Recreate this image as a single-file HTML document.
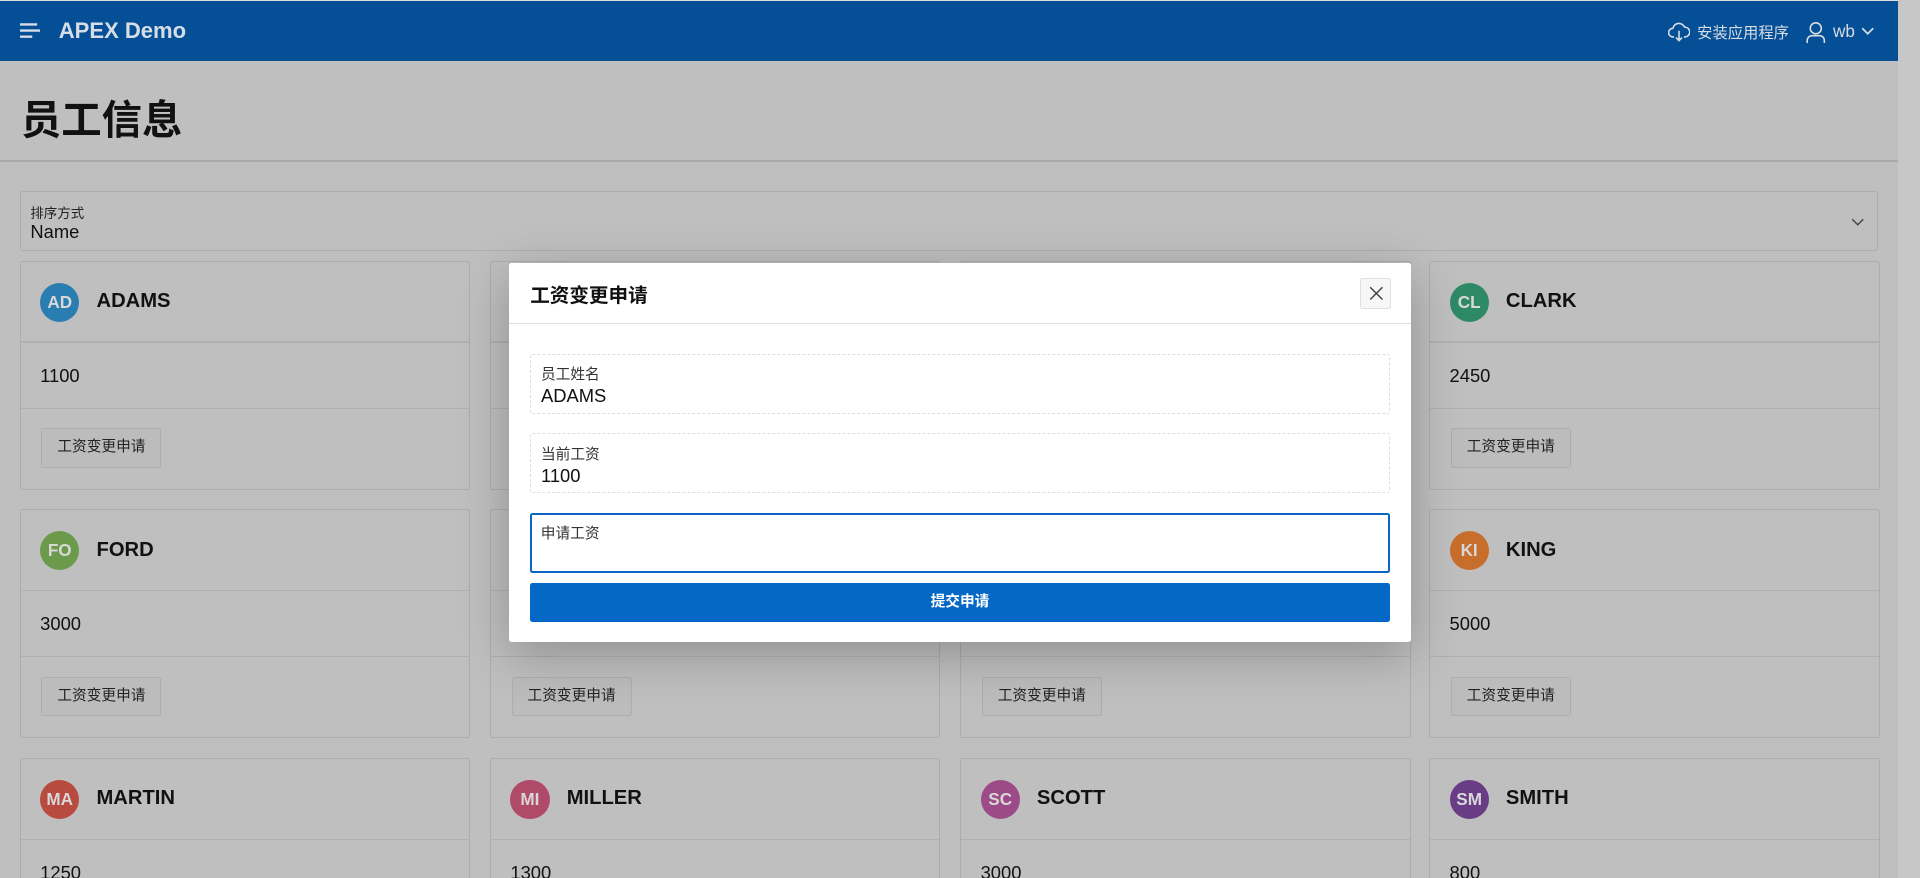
<!DOCTYPE html>
<html><head><meta charset="utf-8"><style>
html{zoom:1.22449;overflow:hidden;height:717px;background:#c7c7c7}
*{box-sizing:border-box;margin:0;padding:0}
body{width:1568px;height:717px;overflow:hidden;background:#c7c7c7;font-family:"Liberation Sans","Noto Sans CJK SC",sans-serif;position:relative}
.page{position:absolute;left:0;top:0;width:1550px;height:717px;background:#bfbfbf;overflow:hidden}
.hdr{position:absolute;left:0;top:0;width:1550px;height:50px;background:#054f96;border-top:1px solid #ddd}
.hdr .t{position:absolute;left:48px;top:14px;color:#d6dde6;font-weight:bold;font-size:18px}
.hdr .r{position:absolute;top:16px;color:#d6dde6;font-size:12.5px}
h1{position:absolute;left:17px;top:71px;font-size:33px;font-weight:bold;color:#111}
.sep{position:absolute;left:0;top:131px;width:1550px;height:1px;background:#aaa}
.sel{position:absolute;left:16px;top:156px;width:1518px;height:49px;border:1px solid #adadad;border-radius:2px}
.sel .l{position:absolute;left:8px;top:8px;font-size:11px;color:#222}
.sel .v{position:absolute;left:8px;top:24px;font-size:15px;color:#111}
.card{position:absolute;width:368px;height:187px;border:1px solid #adadad;border-radius:2px}
.av{position:absolute;left:16px;top:17px;width:32px;height:32px;border-radius:50%;color:#d8d8d8;font-weight:bold;font-size:14px;text-align:center;line-height:32px}
.nm{position:absolute;left:62px;top:23px;font-weight:bold;font-size:16.5px;color:#111}
.d1{position:absolute;left:0;right:0;top:65px;height:1px;background:#b0b0b0}
.d2{position:absolute;left:0;right:0;top:119px;height:1px;background:#b0b0b0}
.val{position:absolute;left:16px;top:84px;font-size:15px;color:#111}
.btn{position:absolute;left:17px;top:136px;width:98px;height:32px;border:1px solid #adadad;border-radius:2px;background:#bcbcbc;font-size:12px;color:#222;text-align:center;line-height:30px}
.modal{position:absolute;left:416px;top:215px;width:736px;height:309px;background:#fff;border-radius:2px;box-shadow:0 10px 40px rgba(0,0,0,.25)}
.mt{position:absolute;left:17px;top:13px;font-size:16px;font-weight:bold;color:#111}
.x{position:absolute;left:695px;top:12px;width:25px;height:25px;border:1px solid #e0e0e0;background:#f7f7f7;border-radius:2px}
.mh{position:absolute;left:0;right:0;top:49px;height:1px;background:#ddd}
.f{position:absolute;left:17px;width:702px;height:49px;border:1px dashed #ddd;border-radius:2px}
.f .l{position:absolute;left:8px;top:7px;font-size:12px;color:#333}
.f .v{position:absolute;left:8px;top:25px;font-size:15px;color:#111}
.sub{position:absolute;left:17px;top:261px;width:702px;height:32px;background:#0568c6;border-radius:2px;color:#fff;font-weight:bold;font-size:12px;text-align:center;line-height:32px}
</style></head><body>
<div class="page">
<div class="hdr">
<svg style="position:absolute;left:16px;top:17px" width="17" height="14" viewBox="0 0 17 14"><path d="M0 2h14M0 7h17M0 12h10" stroke="#d6dde6" stroke-width="2"/></svg>
<div class="t">APEX Demo</div>
<svg style="position:absolute;left:1362px;top:16px" width="18" height="18" viewBox="0 0 18 18" fill="none" stroke="#d6dde6" stroke-width="1.3"><path d="M5 13H4a3.5 3.5 0 0 1 0-7 5 5 0 0 1 9.5-1A4 4 0 0 1 14 13h-1"/><path d="M9 8v8M6.5 13.5 9 16l2.5-2.5"/></svg>
<div class="r" style="left:1386px">安装应用程序</div>
<svg style="position:absolute;left:1475px;top:16px" width="16" height="18" viewBox="0 0 16 18" fill="none" stroke="#d6dde6" stroke-width="1.3"><circle cx="8" cy="6" r="4.5"/><path d="M1 18v-2a4 4 0 0 1 4-4h6a4 4 0 0 1 4 4v2"/></svg>
<div class="r" style="left:1497px;font-size:14px;top:16px">wb</div>
<svg style="position:absolute;left:1520px;top:21px" width="11" height="7" viewBox="0 0 11 7" fill="none" stroke="#d6dde6" stroke-width="1.4"><path d="M1 1l4.5 4.5L10 1"/></svg>
</div>
<h1>员工信息</h1>
<div class="sep"></div>
<div class="sel"><div class="l">排序方式</div><div class="v">Name</div>
<svg style="position:absolute;left:1495px;top:21px" width="11" height="7" viewBox="0 0 11 7" fill="none" stroke="#444" stroke-width="1.2"><path d="M1 1l4.5 4.5L10 1"/></svg></div>

<div class="card" style="left:16px;top:213px"><div class="av" style="background:#2a7db0">AD</div><div class="nm">ADAMS</div><div class="d1"></div><div class="val">1100</div><div class="d2"></div><div class="btn">工资变更申请</div></div>
<div class="card" style="left:400px;top:213px"><div class="av" style="background:#7a7a7a">AL</div><div class="nm">ALLEN</div><div class="d1"></div><div class="val">1600</div><div class="d2"></div><div class="btn">工资变更申请</div></div>
<div class="card" style="left:784px;top:213px"><div class="av" style="background:#7a7a7a">BL</div><div class="nm">BLAKE</div><div class="d1"></div><div class="val">2850</div><div class="d2"></div><div class="btn">工资变更申请</div></div>
<div class="card" style="left:1167px;top:213px"><div class="av" style="background:#2e8a66">CL</div><div class="nm">CLARK</div><div class="d1"></div><div class="val">2450</div><div class="d2"></div><div class="btn">工资变更申请</div></div>

<div class="card" style="left:16px;top:416px"><div class="av" style="background:#6a9a4a">FO</div><div class="nm">FORD</div><div class="d1"></div><div class="val">3000</div><div class="d2"></div><div class="btn">工资变更申请</div></div>
<div class="card" style="left:400px;top:416px"><div class="av" style="background:#7a7a7a">JA</div><div class="nm">JAMES</div><div class="d1"></div><div class="val">950</div><div class="d2"></div><div class="btn">工资变更申请</div></div>
<div class="card" style="left:784px;top:416px"><div class="av" style="background:#7a7a7a">JO</div><div class="nm">JONES</div><div class="d1"></div><div class="val">2975</div><div class="d2"></div><div class="btn">工资变更申请</div></div>
<div class="card" style="left:1167px;top:416px"><div class="av" style="background:#c86e2c">KI</div><div class="nm">KING</div><div class="d1"></div><div class="val">5000</div><div class="d2"></div><div class="btn">工资变更申请</div></div>

<div class="card" style="left:16px;top:619px"><div class="av" style="background:#b84a40">MA</div><div class="nm">MARTIN</div><div class="d1"></div><div class="val">1250</div><div class="d2"></div></div>
<div class="card" style="left:400px;top:619px"><div class="av" style="background:#b04a6a">MI</div><div class="nm">MILLER</div><div class="d1"></div><div class="val">1300</div><div class="d2"></div></div>
<div class="card" style="left:784px;top:619px"><div class="av" style="background:#9c4a88">SC</div><div class="nm">SCOTT</div><div class="d1"></div><div class="val">3000</div><div class="d2"></div></div>
<div class="card" style="left:1167px;top:619px"><div class="av" style="background:#6a3c86">SM</div><div class="nm">SMITH</div><div class="d1"></div><div class="val">800</div><div class="d2"></div></div>
</div>

<div class="modal">
<div class="mt">工资变更申请</div>
<div class="x"><svg style="position:absolute;left:6px;top:6px" width="12" height="12" viewBox="0 0 12 12" stroke="#444" stroke-width="1.2"><path d="M1 1l10 10M11 1L1 11"/></svg></div>
<div class="mh"></div>
<div class="f" style="top:74px"><div class="l">员工姓名</div><div class="v">ADAMS</div></div>
<div class="f" style="top:139px"><div class="l">当前工资</div><div class="v">1100</div></div>
<div class="f" style="top:204px;border:2px solid #0a66c2"><div class="l" style="left:7px;top:6px">申请工资</div></div>
<div class="sub">提交申请</div>
</div>
</body></html>
